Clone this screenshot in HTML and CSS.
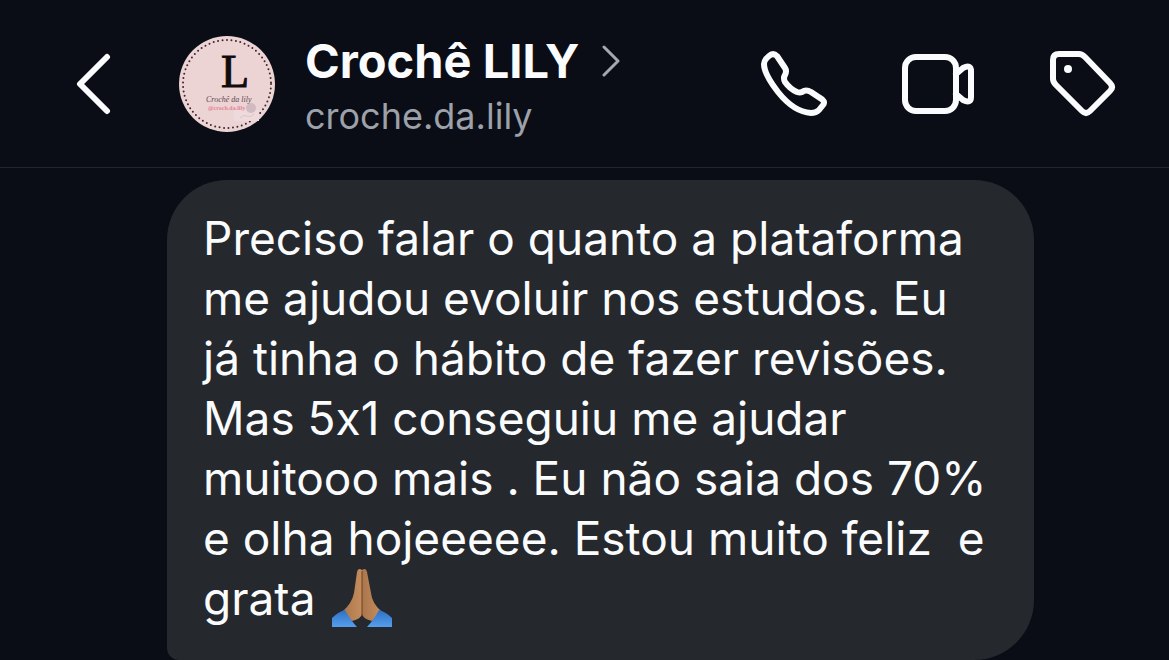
FILE: index.html
```html
<!DOCTYPE html>
<html lang="pt-BR">
<head>
  <meta charset="UTF-8" />
  <meta name="viewport" content="width=device-width, initial-scale=1.0"/>
  <title>Crochê LILY</title>
  <link rel="stylesheet" href="styles.css">
</head>
<body>

  <header class="chat-header">
    <button type="button" class="icon-btn back-btn" aria-label="Voltar">
      <svg width="36" height="62" viewBox="0 0 36 62">
        <path d="M31 4 L4 31 L31 58"/>
      </svg>
    </button>

    <a href="#perfil" class="profile">
      <svg class="avatar" width="96" height="96" viewBox="0 0 96 96">
        <circle cx="48" cy="48" r="48" fill="#ecd3d4"/>
        <circle cx="48" cy="48" r="44" fill="none" stroke="#3f2730" stroke-width="2" stroke-linecap="round" stroke-dasharray="0 4.5"/>
        <rect x="55" y="74" width="25" height="11" fill="#eed9dc"/>
        <circle cx="72" cy="72" r="5" fill="#d0bbc1"/>
        <path d="M61 82q3-4 7-2t7-2" fill="none" stroke="#dfc3ca"/>
        <text class="avatar-letter" x="42" y="51">L</text>
        <text class="avatar-script" x="27" y="66">Crochê da lily</text>
        <text class="avatar-handle" x="29" y="74">@croch.da.lily</text>
      </svg>
      <div class="names">
        <h1>Crochê LILY
          <svg class="chevron" width="20" height="32" viewBox="0 0 20 32">
            <path d="M3 2 L17 16 L3 30"/>
          </svg>
        </h1>
        <p>croche.da.lily</p>
      </div>
    </a>

    <nav class="actions">
      <button type="button" class="icon-btn" aria-label="Ligar">
        <svg width="68" height="68" viewBox="0 0 68 68">
          <path d="M10 6Q14 2 18 6L26 18Q28 21 26 25Q24 28 26 32Q31 39 38 42Q41 43 43 42Q47 39 52 42L61 48Q67 51 64 55L60 60Q57 63 52 63Q35 62 19 42Q5 24 5 14Q5 10 10 6Z"/>
        </svg>
      </button>
      <button type="button" class="icon-btn" aria-label="Chamada de vídeo">
        <svg width="74" height="62" viewBox="0 0 74 62">
          <rect x="4" y="4" width="51" height="54" rx="11"/>
          <path d="M55 21L62 15Q70 11 70 18V44Q70 51 62 47L55 41"/>
        </svg>
      </button>
      <button type="button" class="icon-btn" aria-label="Etiqueta">
        <svg width="68" height="68" viewBox="0 0 68 68">
          <path d="M10 4H30Q33 4 36 7L61 33Q65 37 61 41L41 61Q37 65 33 61L7 35Q4 32 4 29V10Q4 4 10 4Z"/>
          <circle class="dot" cx="19" cy="19" r="4"/>
        </svg>
      </button>
    </nav>
  </header>

  <main class="chat">
    <p class="bubble">Preciso falar o quanto a plataforma<br>me ajudou evoluir nos estudos. Eu<br>já tinha o hábito de fazer revisões.<br>Mas 5x1 conseguiu me ajudar<br>muitooo mais . Eu não saia dos 70%<br>e olha hojeeeee. Estou muito feliz  e<br>grata <svg class="emoji" role="img" aria-label="mãos em oração" width="60" height="60" viewBox="0 0 60 60">
        <defs>
          <linearGradient id="skin" x1="0" x2="1">
            <stop offset="0" stop-color="#a9764c"/>
            <stop offset="1" stop-color="#c68d5e"/>
          </linearGradient>
          <linearGradient id="sleeve" x1="0" y1="0" x2="0" y2="1">
            <stop offset="0" stop-color="#2f6fc2"/>
            <stop offset="1" stop-color="#559fee"/>
          </linearGradient>
        </defs>
        <path d="M30 2Q26-1 25 4L22 25Q20 35 11 43L20 53Q29 51 30 46Z" fill="url(#skin)"/>
        <path d="M30 2Q34-1 35 4L39 25Q40 35 49 43L40 53Q31 51 30 46Z" fill="url(#skin)"/>
        <path d="M30 3V48" stroke="#70421f" stroke-width="1"/>
        <path d="M0 50Q6 44 13 42Q17 50 25 59H0Z" fill="url(#sleeve)"/>
        <path d="M60 50Q54 44 47 42Q43 50 35 59H60Z" fill="url(#sleeve)"/>
      </svg></p>
  </main>

</body>
</html>
```

FILE: styles.css
```css
* {
  box-sizing: border-box;
  margin: 0;
  padding: 0;
}

body {
  min-height: 100vh;
  background: #0a0d15;
  color: #fafbfd;
  font-family: Inter, 'Liberation Sans', sans-serif;
}

.chat-header {
  display: flex;
  align-items: center;
  height: 168px;
  padding: 0 52px 0 76px;
  border-bottom: 1px solid #20242c;
}

.icon-btn {
  display: flex;
  background: none;
  border: none;
  cursor: pointer;
}

.icon-btn svg {
  fill: none;
  stroke: #fafbfd;
  stroke-width: 6;
  stroke-linecap: round;
  stroke-linejoin: round;
}

.icon-btn .dot {
  fill: #fafbfd;
  stroke: none;
}

.back-btn {
  margin-right: 67px;
}

.profile {
  display: flex;
  align-items: center;
  gap: 30px;
  color: inherit;
  text-decoration: none;
}

.avatar-letter {
  font: 46px 'Liberation Serif', serif;
  fill: #120b0e;
  stroke: #120b0e;
  stroke-width: 1;
}

.avatar-script {
  font: italic 8px 'Liberation Serif', serif;
  fill: #5d464d;
}

.avatar-handle {
  font: bold 6px 'Liberation Serif', serif;
  fill: #e78599;
}

.names {
  padding-top: 8px;
}

.names h1 {
  display: flex;
  align-items: center;
  gap: 22px;
  font-size: 47px;
  font-weight: 700;
  line-height: 56px;
}

.names p {
  color: #9ca1aa;
  font-size: 36px;
  line-height: 54px;
}

.chevron {
  fill: none;
  stroke: #a5a8b0;
  stroke-width: 3;
  stroke-linecap: round;
  stroke-linejoin: round;
}

.actions {
  display: flex;
  align-items: center;
  gap: 74px;
  margin-left: auto;
}

.chat {
  padding: 12px 135px 0 167px;
}

.bubble {
  padding: 28px 20px 32px 36px;
  border-radius: 60px 60px 60px 12px;
  background: #25282d;
  font-size: 46px;
  font-feature-settings: 'calt' 0;
  line-height: 60px;
  white-space: pre-wrap;
}

.emoji {
  display: inline-block;
  margin-left: 4px;
  vertical-align: -13px;
}
```
